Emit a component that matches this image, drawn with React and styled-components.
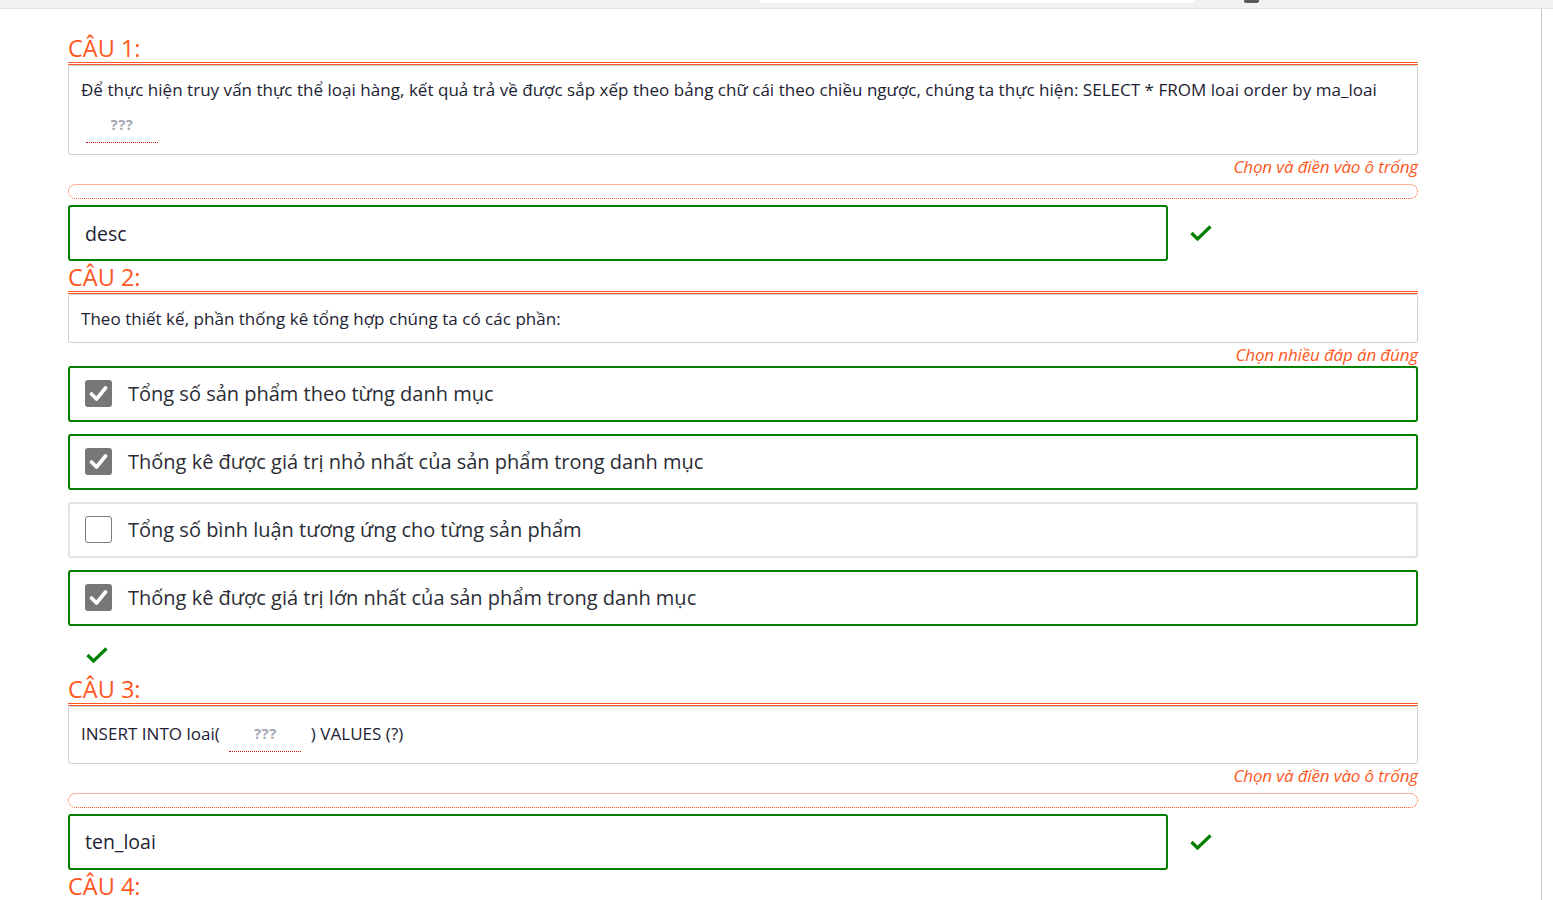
import React from 'react';
import styled, { createGlobalStyle } from 'styled-components';

const GlobalStyle = createGlobalStyle`
  body {
    margin: 0;
    background: #fff;
    font-family: "Open Sans", "Noto Sans", sans-serif;
  }
`;

const Page = styled.div`
  width: 1553px;
  height: 900px;
  overflow: hidden;
  display: flex;
  flex-direction: column;
`;

const TopBar = styled.div`
  height: 8px;
  background: #f1f1f1;
  border-bottom: 1px solid #e3e3e3;
  display: flex;
  align-items: flex-start;
  flex-shrink: 0;
`;

const TabEdge = styled.div`
  margin-left: 760px;
  width: 435px;
  height: 3px;
  background: #fff;
  border-radius: 0 0 14px 6px;
`;

const Knob = styled.div`
  margin-left: 49px;
  width: 15px;
  height: 3px;
  background: #5a5a5a;
  border-radius: 0 0 2px 2px;
`;

const Frame = styled.div`
  flex: 1;
  width: 1542px;
  border-right: 1px solid #c8c8c8;
  box-sizing: border-box;
`;

const Content = styled.div`
  width: 1350px;
  margin-left: 68px;
  padding-top: 26px;
`;

const Heading = styled.div`
  margin-top: ${p => (p.$first ? '0' : '3px')};
  font-size: 23.5px;
  line-height: 27px;
  color: #ff5722;
  border-bottom: 3px double #ff5722;
`;

const QuestionBox = styled.div`
  border: 1px solid #cfcfcf;
  border-radius: 3px;
  padding: 8px 12px 7px;
  font-size: 17px;
  line-height: 32px;
  color: #1c2233;
  letter-spacing: 0.03px;
`;

const Blank = styled.span`
  display: inline-block;
  vertical-align: middle;
  width: 72px;
  height: 34px;
  margin: 2px 5px 4px 5px;
  line-height: 32px;
  text-align: center;
  border-bottom: 1px dotted #d01010;
  color: #a3a7b3;
  font-weight: 700;
  font-size: 15px;
  letter-spacing: 0.5px;
`;

const Hint = styled.div`
  margin-top: 1px;
  height: 22px;
  text-align: right;
  font-style: italic;
  font-size: 17px;
  line-height: 22px;
  color: #ff5722;
  letter-spacing: -0.15px;
`;

const DropZone = styled.div`
  margin-top: 6px;
  height: 15px;
  box-sizing: border-box;
  border: 1px dotted #ff5722;
  border-top: 1px solid #ffb199;
  border-radius: 8px;
`;

const AnswerRow = styled.div`
  margin-top: 6px;
  display: flex;
  align-items: center;
`;

const AnswerInput = styled.div`
  width: 1100px;
  height: 56px;
  box-sizing: border-box;
  border: 2px solid #008000;
  border-radius: 3px;
  padding: 0 15px;
  display: flex;
  align-items: center;
  font-size: 19.5px;
  color: #1c2233;
`;

const CheckMark = styled.svg`
  width: 24px;
  height: 18px;
  margin-left: ${p => p.$offset || 0}px;
  flex-shrink: 0;
`;

const OptionList = styled.div`
  display: flex;
  flex-direction: column;
  gap: 12.5px;
`;

const Option = styled.div`
  height: 55.5px;
  box-sizing: border-box;
  border: 2px solid ${p => (p.$selected ? '#008000' : '#e2e2e2')};
  border-radius: 3px;
  padding: 0 15px;
  display: flex;
  align-items: center;
  gap: 16px;
  font-size: 20px;
  color: #2a2d36;
`;

const Box = styled.div`
  width: 27px;
  height: 27px;
  box-sizing: border-box;
  border-radius: 3px;
  background: ${p => (p.$checked ? '#777' : '#fff')};
  border: ${p => (p.$checked ? 'none' : '1.5px solid #7a7a7a')};
  display: flex;
  align-items: center;
  justify-content: center;
`;

const ResultRow = styled.div`
  margin-top: 11px;
  height: 36px;
  padding-left: 17px;
  display: flex;
  align-items: center;
`;

const Tick = ({ offset }) => (
  <CheckMark $offset={offset} viewBox="0 0 24 18">
    <polyline points="2.5,9 8.5,15 21.5,2.5" fill="none" stroke="#008000" strokeWidth="3.2" />
  </CheckMark>
);

const BoxTick = () => (
  <svg width="19" height="17" viewBox="0 0 19 17">
    <polyline points="2.5,9 7.5,14 16.5,3" fill="none" stroke="#fff" strokeWidth="3.6" strokeLinecap="round" strokeLinejoin="round" />
  </svg>
);

const options = [
  { text: 'Tổng số sản phẩm theo từng danh mục', checked: true },
  { text: 'Thống kê được giá trị nhỏ nhất của sản phẩm trong danh mục', checked: true },
  { text: 'Tổng số bình luận tương ứng cho từng sản phẩm', checked: false },
  { text: 'Thống kê được giá trị lớn nhất của sản phẩm trong danh mục', checked: true },
];

export default function App() {
  return (
    <Page>
      <GlobalStyle />
      <TopBar>
        <TabEdge />
        <Knob />
      </TopBar>
      <Frame>
        <Content>
          <Heading $first>CÂU 1:</Heading>
          <QuestionBox>
            Để thực hiện truy vấn thực thể loại hàng, kết quả trả về được sắp xếp theo bảng chữ cái theo chiều ngược, chúng ta thực hiện: SELECT * FROM loai order by ma_loai{' '}
            <Blank>???</Blank>
          </QuestionBox>
          <Hint>Chọn và điền vào ô trống</Hint>
          <DropZone />
          <AnswerRow>
            <AnswerInput>desc</AnswerInput>
            <Tick offset={21} />
          </AnswerRow>

          <Heading>CÂU 2:</Heading>
          <QuestionBox>Theo thiết kế, phần thống kê tổng hợp chúng ta có các phần:</QuestionBox>
          <Hint>Chọn nhiều đáp án đúng</Hint>
          <OptionList>
            {options.map(o => (
              <Option key={o.text} $selected={o.checked}>
                <Box $checked={o.checked}>{o.checked && <BoxTick />}</Box>
                {o.text}
              </Option>
            ))}
          </OptionList>
          <ResultRow>
            <Tick />
          </ResultRow>

          <Heading>CÂU 3:</Heading>
          <QuestionBox>
            INSERT INTO loai( <Blank>???</Blank> ) VALUES (?)
          </QuestionBox>
          <Hint>Chọn và điền vào ô trống</Hint>
          <DropZone />
          <AnswerRow>
            <AnswerInput>ten_loai</AnswerInput>
            <Tick offset={21} />
          </AnswerRow>

          <Heading>CÂU 4:</Heading>
        </Content>
      </Frame>
    </Page>
  );
}
